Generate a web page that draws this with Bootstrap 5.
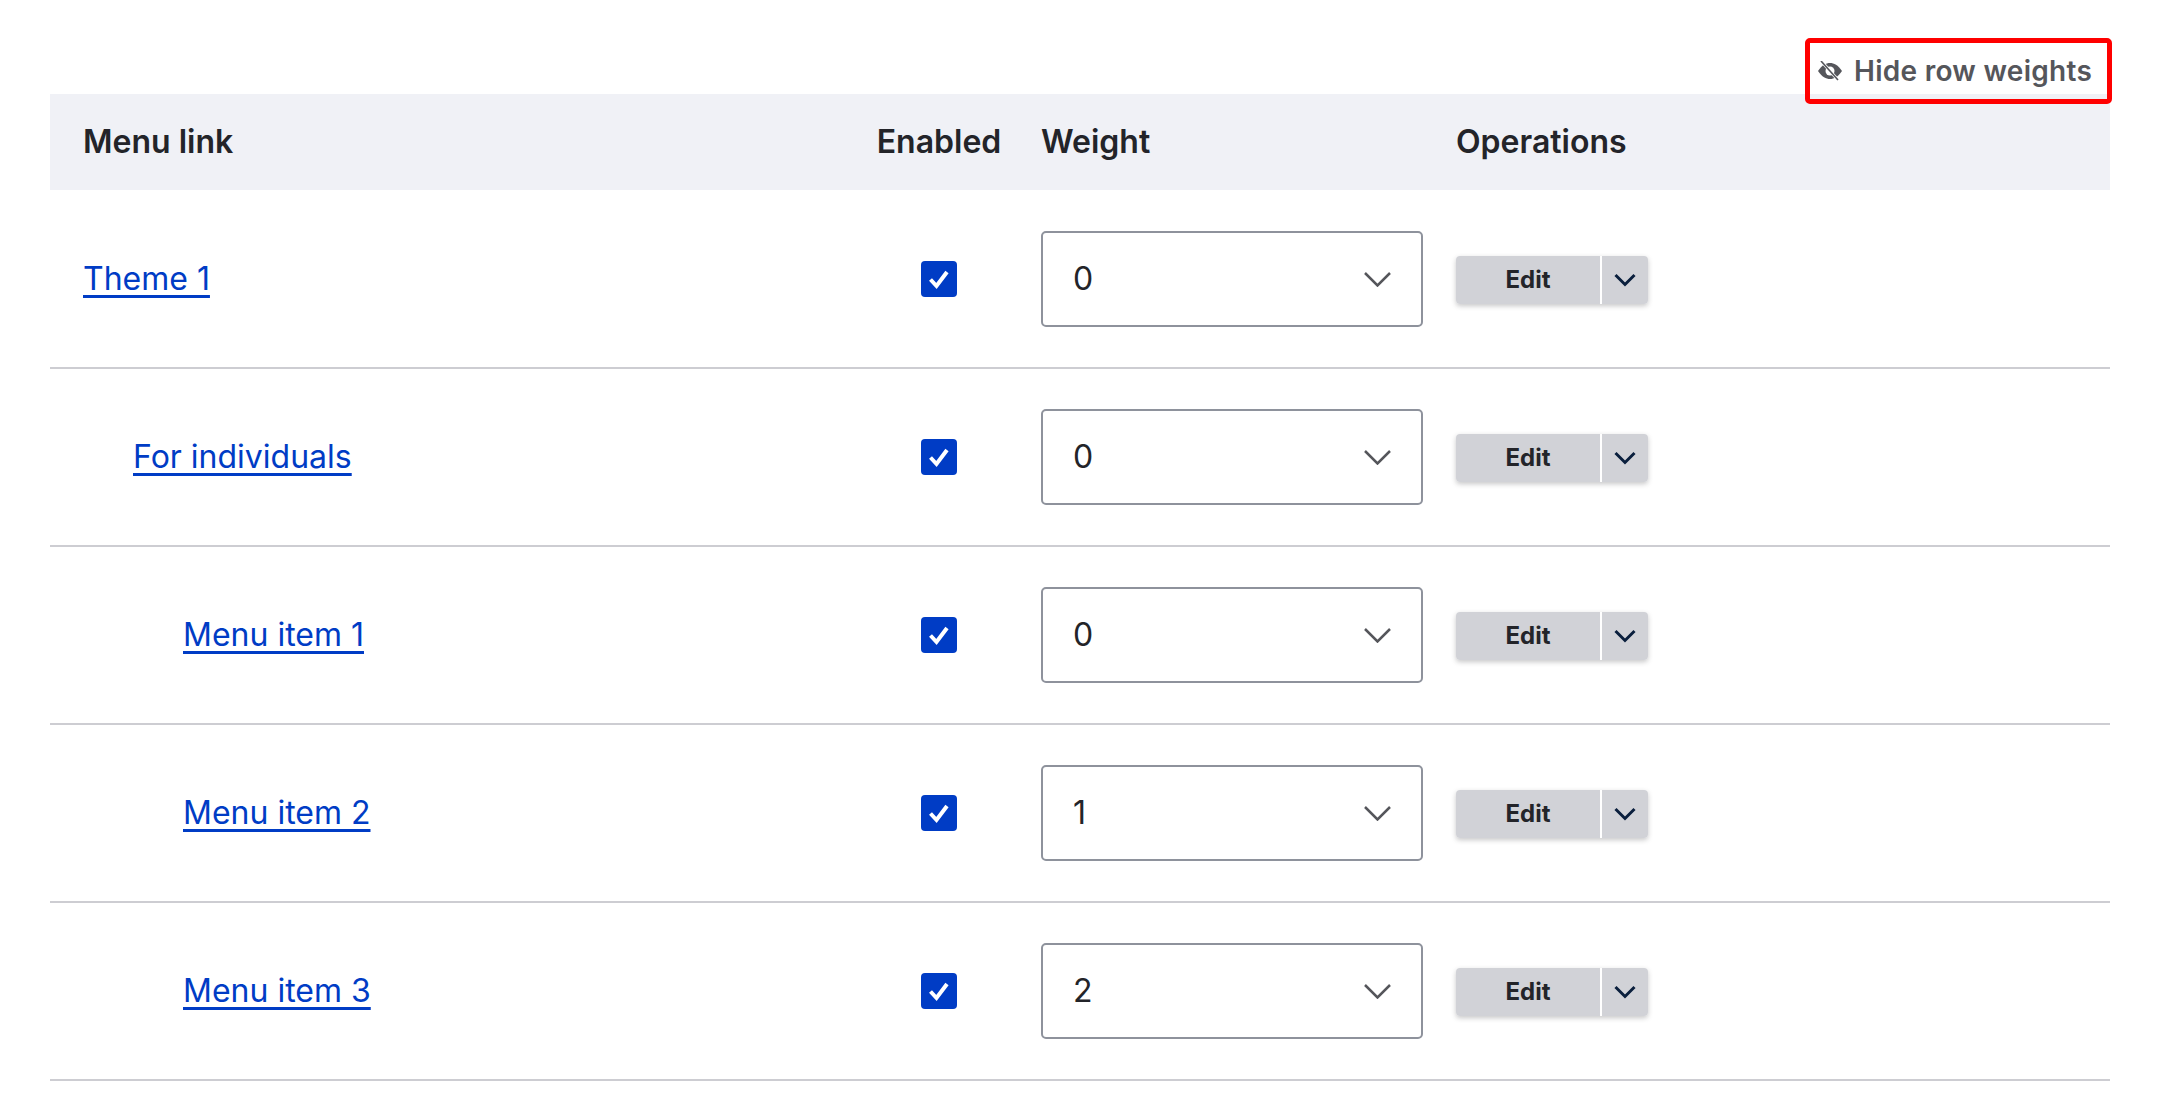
<!doctype html>
<html lang="en"><head><meta charset="utf-8"><title>Menu</title>
<link rel="stylesheet" href="https://cdn.jsdelivr.net/npm/bootstrap@5.3.0/dist/css/bootstrap.min.css">
<style>
body{font-family:Inter,"Liberation Sans",sans-serif;background:#fff;color:#232429;font-size:32px;}
.menu-page{padding:38px 58px 0 50px;}
.weights-wrap{margin-bottom:-10px;margin-right:-2px;position:relative;z-index:2;}
.weights-toggle{height:66px;width:307px;border:5px solid #f00;border-radius:5px;background:transparent;color:#55565b;font-weight:600;font-size:28px;letter-spacing:.01em;gap:12px;padding:0 0 0 8px;line-height:1;}
.menu-table{table-layout:fixed;width:2060px;margin:0;--bs-table-bg:transparent;}
.menu-table th{height:96px;background:#f0f1f6;font-weight:600;font-size:32px;color:#232429;vertical-align:middle;border:0;padding:0 0 0 33px;}
.menu-table td{height:178px;border-bottom:2px solid #cdcdd2;vertical-align:middle;padding:0 0 0 33px;}
.menu-table .cell-enabled{text-align:center;padding:0;}
.menu-table .cell-weight{padding-left:24px;}
.menu-table .cell-ops{padding-left:16px;}
.menu-link{color:#003cc5;text-decoration:underline;font-size:32px;text-decoration-thickness:2.5px;text-underline-offset:5px;}
.level-1{padding-left:50px;display:inline-block;}
.level-2{padding-left:100px;display:inline-block;}
.menu-table .form-check-input{width:36px;height:36px;margin:0;float:none;border-radius:4px;border:0;background-color:#003cc5;display:block;margin:0 auto;--bs-form-check-bg-image:none;background-image:url("data:image/svg+xml,%3Csvg xmlns='http://www.w3.org/2000/svg' viewBox='0 0 36 36'%3E%3Cpath d='M9.5 18.5l6 6.5 10.5-14' fill='none' stroke='%23fff' stroke-width='4'/%3E%3C/svg%3E");}
.weight-select{width:382px;height:96px;border:2px solid #8e929c;border-radius:5px;font-size:32px;color:#232429;padding:0 0 0 30px;background-size:27px 15px;background-position:right 30px top 39px;background-image:url("data:image/svg+xml,%3Csvg xmlns='http://www.w3.org/2000/svg' viewBox='0 0 27 15'%3E%3Cpath d='M1 1l12.5 12.5L26 1' fill='none' stroke='%2355565b' stroke-width='2.5'/%3E%3C/svg%3E");}
.drop-group{width:192px;height:48px;box-shadow:0 2px 5px rgba(35,36,41,.25);border-radius:4px;}
.drop-group .btn{background:#d1d2d7;border:0;border-radius:0;color:#232429;height:48px;padding:0;}
.drop-edit{width:144px;font-weight:700;font-size:24px;border-radius:4px 0 0 4px!important;line-height:1;}
.drop-toggle{width:48px;margin-left:0!important;border-left:2px solid #fff!important;border-radius:0 4px 4px 0!important;display:flex;align-items:center;justify-content:center;}
</style></head><body>
<div class="menu-page">
<div class="weights-wrap d-flex justify-content-end">
<button type="button" class="weights-toggle d-flex align-items-center">
<svg width="24" height="20" viewBox="0 0 24 20" aria-hidden="true"><path d="M0 10C4 4 8 2 12 2s8 2 12 8c-4 6-8 8-12 8S4 16 0 10z" fill="#55565b"/><circle cx="12" cy="10" r="4.5" fill="#fff"/><path d="M5 2l15 17" stroke="#fff" stroke-width="3"/><path d="M3 0l17 19" stroke="#55565b" stroke-width="1.6"/></svg>
<span>Hide row weights</span></button>
</div>
<table class="table menu-table">
<colgroup><col style="width:811px"><col style="width:156px"><col style="width:423px"><col style="width:670px"></colgroup>
<thead><tr><th>Menu link</th><th class="cell-enabled">Enabled</th><th class="cell-weight">Weight</th><th class="cell-ops">Operations</th></tr></thead>
<tbody id="rows"></tbody></table>
</div>
<script src="https://cdn.jsdelivr.net/npm/bootstrap@5.3.0/dist/js/bootstrap.bundle.min.js"></script>
<script>
var data=[["Theme 1",0,0],["For individuals",1,0],["Menu item 1",2,0],["Menu item 2",2,1],["Menu item 3",2,2]];
document.getElementById('rows').innerHTML=data.map(function(d){
var opts=[0,1,2].map(function(o){return '<option'+(o===d[2]?' selected':'')+'>'+o+'</option>'}).join('');
return '<tr><td><span class="level-'+d[1]+'"><a class="menu-link" href="#">'+d[0]+'</a></span></td>'+
'<td class="cell-enabled"><input class="form-check-input" type="checkbox" checked aria-label="Enabled"></td>'+
'<td class="cell-weight"><select class="form-select weight-select" aria-label="Weight">'+opts+'</select></td>'+
'<td class="cell-ops"><div class="btn-group drop-group"><button type="button" class="btn drop-edit">Edit</button><button type="button" class="btn drop-toggle" aria-label="More"><svg width="22" height="14" viewBox="0 0 22 14"><path d="M1.5 2L11 11.5 20.5 2" fill="none" stroke="#0a1f3d" stroke-width="3"/></svg></button></div></td></tr>';
}).join('');
</script>
</body></html>
